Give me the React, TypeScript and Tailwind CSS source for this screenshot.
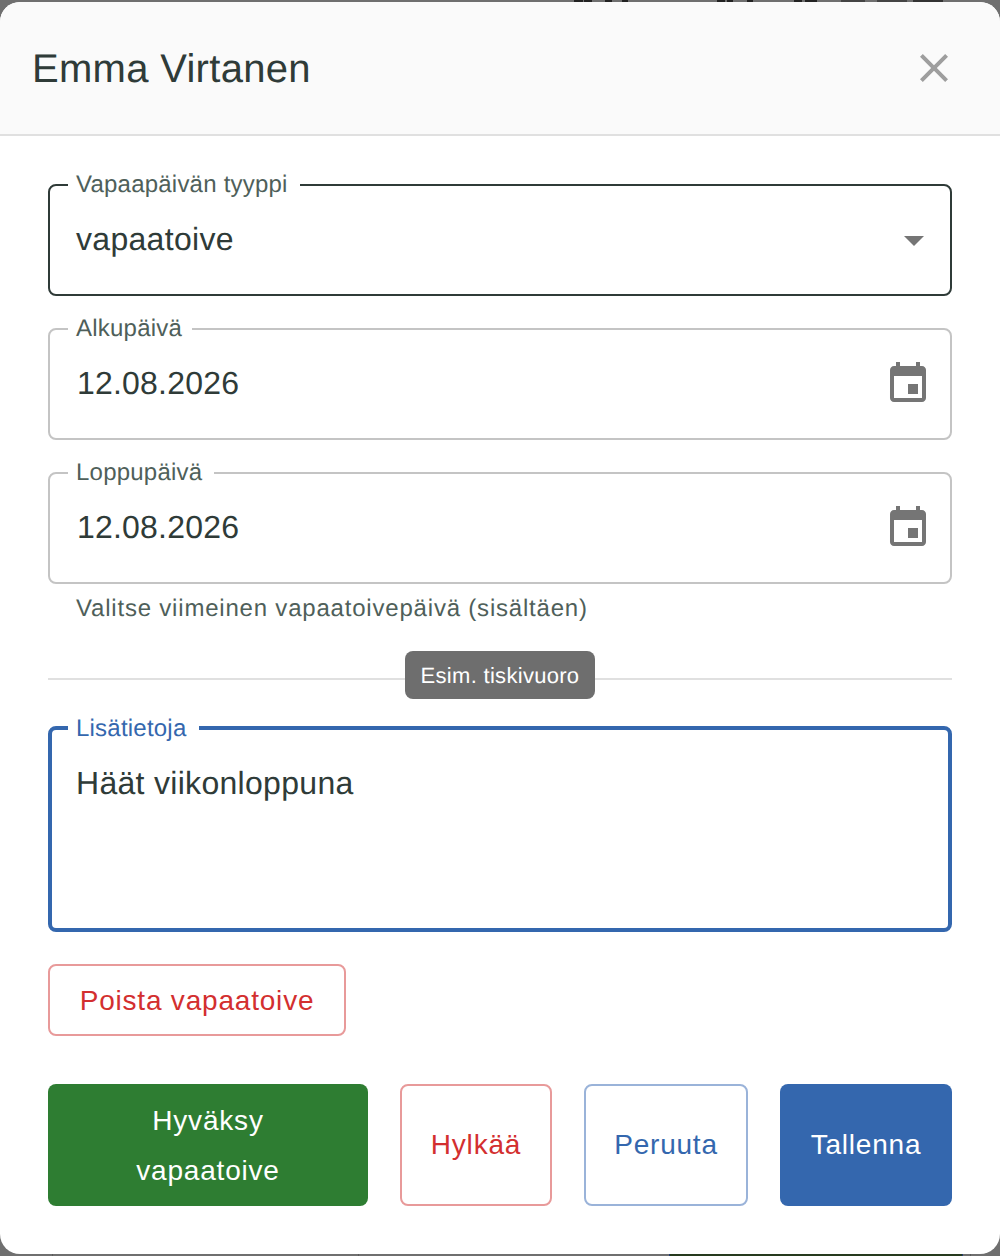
const font = { fontFamily: '"Liberation Sans", Arial, sans-serif' }

function CalendarIcon() {
  return (
    <svg viewBox="0 0 24 24" className="w-[48px] h-[48px] fill-[#757575] shrink-0">
      <path d="M17 12h-5v5h5v-5zM16 1v2H8V1H6v2H5c-1.11 0-1.99.9-1.99 2L3 19c0 1.1.89 2 2 2h14c1.1 0 2-.9 2-2V5c0-1.1-.9-2-2-2h-1V1h-2zm3 18H5V8h14v11z" />
    </svg>
  )
}

function FloatingLabel({ text, className }: { text: string; className: string }) {
  return (
    <span className={`absolute bg-white pl-2 pr-3 text-[24px] leading-[24px] tracking-[0.22px] ${className}`}>
      {text}
    </span>
  )
}

function DateField({ label, value, notch }: { label: string; value: string; notch: string }) {
  return (
    <div className="relative h-[112px] border-2 border-[#c4c4c4] rounded-lg pl-[26px] pr-[18px] flex items-center justify-between">
      <FloatingLabel text={label} className={`top-[-13px] left-[18px] text-[#4f5f5a] ${notch}`} />
      <span className="text-[32px] tracking-[0.2px] text-[#2f3b38] pb-[2px] pl-[1px]">{value}</span>
      <CalendarIcon />
    </div>
  )
}

export default function App() {
  return (
    <div style={font} className="w-[1000px] h-[1256px] bg-[#6f6f6f] flex flex-col overflow-hidden [text-rendering:geometricPrecision]">
      {/* page behind the overlay */}
      <div className="h-[2px] shrink-0 flex">
        <div className="w-[574px]" />
        <div className="w-[9px] bg-[#222]" />
        <div className="w-[1px]" />
        <div className="w-[8px] bg-[#222]" />
        <div className="w-[13px]" />
        <div className="w-[7px] bg-[#222]" />
        <div className="w-[10px]" />
        <div className="w-[6px] bg-[#222]" />
        <div className="w-[89px]" />
        <div className="w-[8px] bg-[#222]" />
        <div className="w-[2px]" />
        <div className="w-[6px] bg-[#222]" />
        <div className="w-[14px]" />
        <div className="w-[6px] bg-[#222]" />
        <div className="w-[41px]" />
        <div className="w-[8px] bg-[#222]" />
        <div className="w-[3px]" />
        <div className="w-[12px] bg-[#222]" />
        <div className="w-[24px]" />
        <div className="w-[24px] bg-[#444]" />
        <div className="w-[12px]" />
        <div className="w-[30px] bg-[#444]" />
        <div className="w-[6px]" />
        <div className="w-[30px] bg-[#333]" />
      </div>

      <div className="bg-white rounded-[20px] h-[1252px] shrink-0 overflow-hidden">
        <div className="h-[134px] bg-[#fafafa] border-b-2 border-[#e0e0e0] pl-[32px] pr-[42px] flex items-center justify-between">
          <span className="text-[40px] tracking-[0.3px] text-[#2f3b38] pt-[1px]">Emma Virtanen</span>
          <svg viewBox="0 0 24 24" className="w-[48px] h-[48px] fill-[#9e9e9e]">
            <path d="M19 6.41 17.59 5 12 10.59 6.41 5 5 6.41 10.59 12 5 17.59 6.41 19 12 13.41 17.59 19 19 17.59 13.41 12z" />
          </svg>
        </div>

        <div className="px-[48px] pt-[48px]">
          <div className="relative h-[112px] border-2 border-[#2f3b38] rounded-lg pl-[26px] pr-[12px] flex items-center justify-between">
            <FloatingLabel text="Vapaapäivän tyyppi" className="top-[-13px] left-[18px] text-[#4f5f5a]" />
            <span className="text-[32px] tracking-[0.3px] text-[#2f3b38] pb-[2px]">vapaatoive</span>
            <svg viewBox="0 0 24 24" className="w-[48px] h-[48px] fill-[#757575]">
              <path d="M7 10l5 5 5-5z" />
            </svg>
          </div>

          <div className="mt-[32px] flex flex-col gap-[32px]">
            <DateField label="Alkupäivä" value="12.08.2026" notch="pr-[10px]" />
            <DateField label="Loppupäivä" value="12.08.2026" notch="pr-3" />
          </div>
          <p className="mt-[10px] pl-[28px] text-[24px] leading-[30px] tracking-[0.8px] text-[#4f5f5a]">
            Valitse viimeinen vapaatoivepäivä (sisältäen)
          </p>

          <div className="relative mt-[54px] h-[2px] bg-[#e0e0e0]">
            <div className="absolute left-1/2 top-[-27px] -translate-x-1/2 w-[190px] h-[48px] rounded-lg bg-[#6e6e6e] text-white text-[22px] tracking-[0.3px] flex items-center justify-center">
              Esim. tiskivuoro
            </div>
          </div>

          <div className="relative mt-[46px] h-[206px] border-[4px] border-[#3467ae] rounded-lg pl-[24px] pt-[34px]">
            <FloatingLabel text="Lisätietoja" className="top-[-13px] left-[16px] text-[#3467ae]" />
            <p className="text-[32px] leading-[38px] tracking-[0.3px] text-[#2f3b38]">Häät viikonloppuna</p>
          </div>

          <button className="mt-[32px] w-[298px] h-[72px] border-2 border-[#e89a9a] rounded-lg text-[#d32f2f] text-[28px] tracking-[0.8px] bg-white pt-[2px]">
            Poista vapaatoive
          </button>

          <div className="mt-[48px] h-[122px] flex gap-[32px] text-[28px] tracking-[0.8px]">
            <button className="w-[320px] rounded-lg bg-[#2e7d32] text-white leading-[50px] pt-[2px]">
              Hyväksy
              <br />
              vapaatoive
            </button>
            <button className="w-[152px] rounded-lg border-2 border-[#e89a9a] bg-white text-[#d32f2f]">Hylkää</button>
            <button className="w-[164px] rounded-lg border-2 border-[#9ab3d9] bg-white text-[#3467ae]">Peruuta</button>
            <button className="w-[172px] rounded-lg bg-[#3467ae] text-white">Tallenna</button>
          </div>
        </div>
      </div>

      <div className="h-[2px] shrink-0 flex">
        <div className="w-[52px]" />
        <div className="w-[1px] bg-[#5a5a5a]" />
        <div className="w-[305px]" />
        <div className="w-[1px] bg-[#5a5a5a]" />
        <div className="w-[310px]" />
        <div className="w-[294px] bg-[#263a1e] border-x border-[#1f3a6e]" />
        <div className="w-[7px]" />
        <div className="w-[1px] bg-[#5a5a5a]" />
      </div>
    </div>
  )
}
